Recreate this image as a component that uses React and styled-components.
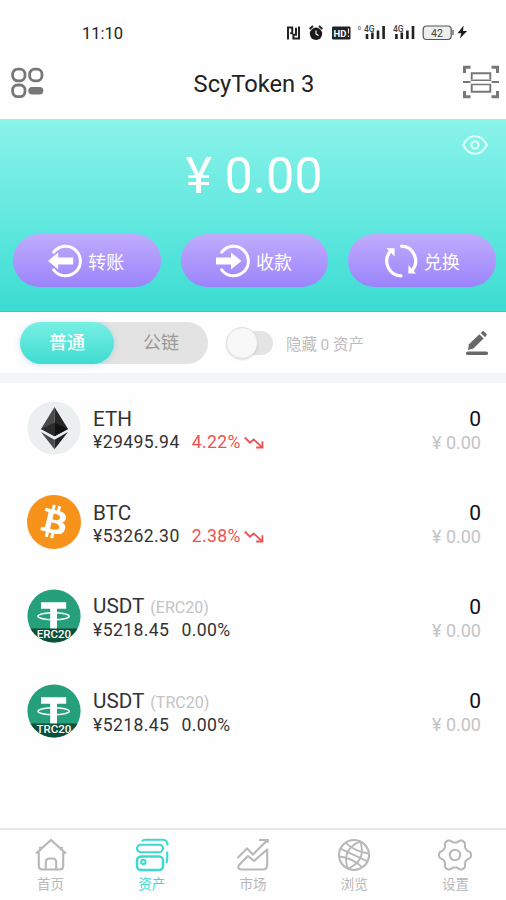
import React from "react";
import styled, { createGlobalStyle } from "styled-components";
import { SiBitcoin } from "react-icons/si";

const assets = [
  { name: "ETH", coin: "eth", price: "¥29495.94", change: "4.22%", down: true },
  { name: "BTC", coin: "btc", price: "¥53262.30", change: "2.38%", down: true },
  { name: "USDT", coin: "usdt", chain: "ERC20", price: "¥5218.45", change: "0.00%" },
  { name: "USDT", coin: "usdt", chain: "TRC20", price: "¥5218.45", change: "0.00%" },
];

function App() {
  return (
    <Screen>
      <GlobalStyle />
      <StatusBar />
      <Header>
        <MenuIcon />
        <h1>ScyToken 3</h1>
        <ScanIcon />
      </Header>
      <Balance>
        <EyeRow>
          <EyeIcon />
        </EyeRow>
        <Total>¥ 0.00</Total>
        <Actions>
          <ActionButton>
            <SendIcon />
            转账
          </ActionButton>
          <ActionButton>
            <ReceiveIcon />
            收款
          </ActionButton>
          <ActionButton>
            <SwapIcon />
            兑换
          </ActionButton>
        </Actions>
      </Balance>
      <Filter>
        <Segment>
          <SegmentItem $active>普通</SegmentItem>
          <SegmentItem>公链</SegmentItem>
        </Segment>
        <Toggle>
          <Knob />
          <Track />
        </Toggle>
        <HideLabel>隐藏 0 资产</HideLabel>
        <PencilIcon />
      </Filter>
      <AssetList>
        {assets.map((asset) => (
          <AssetRow key={asset.name + asset.chain}>
            <CoinIcon coin={asset.coin} chain={asset.chain} />
            <AssetInfo>
              <AssetName>
                {asset.name}
                {asset.chain && <small>({asset.chain})</small>}
              </AssetName>
              <AssetPrice>
                {asset.price}
                <Change $down={asset.down}>{asset.change}</Change>
                {asset.down && <DownIcon />}
              </AssetPrice>
            </AssetInfo>
            <AssetAmount>
              <b>0</b>
              <span>¥ 0.00</span>
            </AssetAmount>
          </AssetRow>
        ))}
      </AssetList>
      <TabBar>
        <Tab>
          <HomeIcon />
          首页
        </Tab>
        <Tab $active>
          <WalletIcon />
          资产
        </Tab>
        <Tab>
          <MarketIcon />
          市场
        </Tab>
        <Tab>
          <GlobeIcon />
          浏览
        </Tab>
        <Tab>
          <GearIcon />
          设置
        </Tab>
      </TabBar>
    </Screen>
  );
}

function StatusBar() {
  return (
    <Status>
      <time>11:10</time>
      <svg width="184" height="20" viewBox="285 23 184 20">
        {/* nfc */}
        <path d="M288 39.500V26.500M288 27.400h4.200v5.800h-2M299 26.500v13M299 38.500h-5.600v-3.800h2.600v-7" fill="none" stroke="#222" strokeWidth="2" />
        {/* alarm */}
        <circle cx="316" cy="33.800" r="6.200" fill="#1c1c1c" />
        <path d="M309.600 29l3.400-3M322.400 29l-3.400-3" stroke="#1c1c1c" strokeWidth="1.800" />
        <path d="M316 30.500v3.600l2.600 1.400" fill="none" stroke="#fff" strokeWidth="1.100" />
        {/* hd */}
        <rect x="332" y="26.500" width="18.500" height="13" rx="1.200" fill="#222" />
        <text x="333.600" y="36.600" fontSize="9.500" fontWeight="700" fill="#fff">HD</text>
        <path d="M348.400 28.500v5M348.400 35.500v1.500" stroke="#fff" strokeWidth="1" />
        {/* signal */}
        <text x="357.800" y="30" fontSize="5.500" fill="#333">0</text>
        <text x="364" y="32" fontSize="8.500" fontWeight="500" fill="#444">4G</text>
        <path d="M367 39v-5M372.400 39v-6.500M378 39V30.500M383.600 39V26" stroke="#222" strokeWidth="2.600" />
        <text x="393" y="32" fontSize="8.500" fontWeight="500" fill="#444">4G</text>
        <path d="M396.400 39v-5M401.800 39v-6.500M407.400 39V30.500M413 39V26" stroke="#222" strokeWidth="2.600" />
        {/* battery */}
        <rect x="423.200" y="26" width="28" height="13.500" rx="3.500" fill="#eee" stroke="#555" strokeWidth="1.200" />
        <path d="M453 30v5" stroke="#666" strokeWidth="1.400" />
        <text x="431" y="36.600" fontSize="10.500" fill="#444">42</text>
        <path d="M463.600 25.600l-6 7.600h3.700l-1.400 5.200 7.200-7.400h-4.100z" fill="#1a1a1a" />
      </svg>
    </Status>
  );
}

const MenuIcon = () => (
  <svg width="34" height="32" viewBox="0 0 34 32" fill="none" stroke="#777" strokeWidth="2.800">
    <rect x="2.600" y="2.200" width="12.400" height="11.600" rx="5" />
    <rect x="19.600" y="2.200" width="12.400" height="11.600" rx="5" />
    <rect x="2.600" y="18" width="12.400" height="11.600" rx="5" />
    <rect x="18.300" y="20" width="15" height="7.400" rx="3.700" fill="#777" stroke="none" />
  </svg>
);

const ScanIcon = () => (
  <svg width="38" height="34" viewBox="0 0 38 34" fill="none" stroke="#777" strokeWidth="3">
    <path d="M2.500 8V2.200H8.500M29.500 2.200h6V8M2.500 26v5.800H8.500M29.500 31.800h6V26" />
    <path d="M9.700 14.500V8.200h18.600v6.300M9.700 20v6.800h18.600V20" strokeWidth="1.900" />
    <path d="M1 17.100h7.500M29.500 17.100H37" strokeWidth="2" />
    <path d="M8.800 15.200h20.400M8.800 19.600h20.400" strokeWidth="1.500" />
  </svg>
);

const EyeIcon = () => (
  <svg width="26" height="20" viewBox="0 0 26 20" fill="none" stroke="#dcfffc" strokeWidth="2.100">
    <path d="M1.200 10C4.300 3.800 8.500 1.200 13 1.200S21.700 3.800 24.800 10C21.700 16.200 17.500 18.800 13 18.800S4.300 16.200 1.200 10z" strokeLinejoin="round" />
    <circle cx="13" cy="10" r="3.600" />
  </svg>
);

const SendIcon = () => (
  <svg width="34" height="34" viewBox="0 0 34 34">
    <path d="M5.700 8.200A14.800 14.800 0 1 1 5.700 25.800" fill="none" stroke="#fff" strokeWidth="3" strokeLinecap="round" />
    <path d="M0 17l10.200-8.600v5.200h15v6.800h-15v5.200z" fill="#fff" />
  </svg>
);

const ReceiveIcon = () => (
  <svg width="34" height="34" viewBox="0 0 34 34">
    <path d="M5.700 8.200A14.800 14.800 0 1 1 5.700 25.800" fill="none" stroke="#fff" strokeWidth="3" strokeLinecap="round" />
    <path d="M25.400 17L15 8.400v5.200H0v6.800h15v5.200z" fill="#fff" />
  </svg>
);

const SwapIcon = () => (
  <svg width="34" height="34" viewBox="0 0 34 34">
    <g fill="none" stroke="#fff" strokeWidth="3.200" strokeLinecap="round">
      <path d="M17.500 2.200A14.800 14.800 0 0 1 28.600 26" />
      <path d="M17 31.800A14.800 14.800 0 0 1 5.800 8" />
    </g>
    <path d="M2.400 4.200h8.200v8.200zM32 29.600h-7.600V21z" fill="#fff" />
  </svg>
);

const PencilIcon = () => (
  <svg width="24" height="26" viewBox="0 0 24 26" fill="#686868">
    <path d="M3 20l1-5.800L14.400 4.200l4.200 4.400L8.400 18.600z" />
    <path d="M15.800 3l1.500-1.600q.9-.8 1.800 0l2.300 2.400q.8.900 0 1.700L20 7.200z" />
    <rect x="1" y="21.500" width="22" height="3.600" rx="1.700" />
  </svg>
);

const DownIcon = () => (
  <svg width="20" height="13" viewBox="0 0 20 13" fill="none" stroke="#ee5253" strokeWidth="1.800">
    <path d="M.8 1.500l5.200 5.200 3.700-3.200 8.300 7.700M18.400 5.200v6.300h-6.200" />
  </svg>
);

function CoinIcon({ coin, chain }) {
  if (coin === "btc") {
    return (
      <Coin>
        <SiBitcoin size={54} color="#f7931a" />
      </Coin>
    );
  }
  if (coin === "eth") {
    return (
      <Coin>
        <svg width="54" height="54" viewBox="0 0 54 54">
          <circle cx="27" cy="27" r="26.600" fill="#ebeff0" />
          <path d="M27.500 6L14 28l13.500 7.200z" fill="#4a4a4a" />
          <path d="M27.500 6L41 28l-13.500 7.200z" fill="#282828" />
          <path d="M27.500 21.800L14 28l13.500 7.200z" fill="#2b2b2b" />
          <path d="M27.500 21.800L41 28l-13.500 7.200z" fill="#111" />
          <path d="M14 31l13.500 7.700v9.500z" fill="#4a4a4a" />
          <path d="M41 31l-13.500 7.700v9.500z" fill="#232323" />
        </svg>
      </Coin>
    );
  }
  return (
    <Coin>
      <svg width="54" height="54" viewBox="0 0 54 54">
        <clipPath id={"round" + chain}>
          <circle cx="27" cy="27" r="26.600" />
        </clipPath>
        <g clipPath={`url(#round${chain})`}>
          <rect width="54" height="54" fill="#25a07b" />
          <path d="M14 13.300h25.200v6.400h-9.200V40h-6.800V19.700H14z" fill="#fff" />
          <ellipse cx="26.600" cy="27.300" rx="15.600" ry="3.500" fill="none" stroke="#fff" strokeWidth="1.500" />
          <rect y="39.500" width="54" height="15" fill="#0e4f39" />
          <text x="27" y="48.600" textAnchor="middle" fontSize="11.500" fontWeight="500" fill="#fff">
            {chain}
          </text>
        </g>
      </svg>
    </Coin>
  );
}

const HomeIcon = () => (
  <TabIcon>
    <path d="M2 15.500L17 2l15 13.500M6.200 13V8.800M27.800 13V8.800M4.800 14v14q0 3.500 3.500 3.500h17.400q3.500 0 3.500-3.500V14" />
    <path d="M11.800 31v-6.500q0-4 4-4h2.400q4 0 4 4V31" />
  </TabIcon>
);

const WalletIcon = () => (
  <TabIcon>
    <path d="M7 3.500q1-1.700 3.500-1.700H28q4.500 0 4.500 5.700M32.200 13.500v8q0 2.500-1.200 3.500" />
    <rect x="2" y="6.800" width="26" height="7.400" rx="3.700" />
    <rect x="2" y="18.500" width="26" height="13.500" rx="4" strokeWidth="2.500" />
    <circle cx="8.400" cy="23.900" r="2.100" />
  </TabIcon>
);

const MarketIcon = () => (
  <TabIcon>
    <path d="M1.500 20L11 10.500l6 6L31 2.500M23 2h8.800v2.800" />
    <path d="M3 27l9-9 6 5L31.200 11.500V27q0 4.500-4.500 4.500H5Q.8 30.800 3 27z" strokeLinejoin="round" />
  </TabIcon>
);

const GlobeIcon = () => (
  <TabIcon>
    <circle cx="17" cy="17" r="15" />
    <g transform="rotate(25 17 17)" strokeWidth="1.800">
      <path d="M2 17h30M4.500 9.500q12.500 4 25 0M4.500 24.500q12.500-4 25 0" />
      <path d="M17 2q-14 15 0 30M17 2q14 15 0 30" />
    </g>
  </TabIcon>
);

// six soft teeth around the centre
const gearPoints = Array.from({ length: 120 }, (_, i) => {
  const a = (i / 120) * Math.PI * 2;
  const r = 14.2 + 1.9 * Math.tanh(1.6 * Math.cos(6 * a));
  return `${(17 + r * Math.cos(a)).toFixed(2)},${(17 + r * Math.sin(a)).toFixed(2)}`;
}).join(" ");

const GearIcon = () => (
  <TabIcon>
    <polygon points={gearPoints} strokeLinejoin="round" />
    <circle cx="17" cy="17" r="5.200" />
  </TabIcon>
);

const TabIcon = ({ children }) => (
  <svg width="34" height="34" viewBox="0 0 34 34" fill="none" stroke="currentColor" strokeWidth="2.100">
    {children}
  </svg>
);

const GlobalStyle = createGlobalStyle`
  * {
    box-sizing: border-box;
  }
  body {
    margin: 0;
    background: #fff;
    font-family: Roboto, "Noto Sans CJK SC", sans-serif;
  }
`;

const Screen = styled.div`
  width: 506px;
  height: 900px;
  display: flex;
  flex-direction: column;
  overflow: hidden;
  background: #fefefe;
`;

const Status = styled.div`
  height: 47px;
  padding: 20px 37px 0 82px;
  display: flex;
  align-items: flex-start;
  justify-content: space-between;
  color: #222;
  time {
    margin-top: 4px;
    font-size: 16.500px;
    line-height: 20px;
  }
  svg {
    margin-top: 3px;
  }
`;

const Header = styled.header`
  height: 72px;
  padding: 1px 6px 1px 10px;
  display: flex;
  align-items: center;
  justify-content: space-between;
  h1 {
    margin: 0;
    padding: 1px 0 0 2px;
    font-size: 23.700px;
    font-weight: 400;
    line-height: 30px;
    color: #222;
  }
  svg:last-child {
    margin-bottom: 2px;
  }
`;

const Balance = styled.section`
  height: 193px;
  display: flex;
  flex-direction: column;
  background: linear-gradient(#8bf3ea, #5fe7de 56%, #3bdcd2);
  border-bottom: 1px solid #2fcfc4;
`;

const EyeRow = styled.div`
  height: 29px;
  padding: 16px 18px 0 0;
  display: flex;
  justify-content: flex-end;
  svg {
    flex: none;
  }
`;

const Total = styled.div`
  height: 56px;
  padding-left: 2px;
  font-size: 50.300px;
  line-height: 56px;
  text-align: center;
  color: #fff;
`;

const Actions = styled.div`
  margin-top: 30px;
  padding: 0 10px 0 13px;
  display: flex;
  gap: 20px;
`;

const ActionButton = styled.button`
  flex: 1;
  height: 53px;
  padding: 0 1px 0 0;
  display: flex;
  align-items: center;
  justify-content: center;
  gap: 6px;
  border: none;
  border-radius: 27px;
  background: linear-gradient(#c0acfd, #9b84fb);
  color: #fff;
  font-family: inherit;
  font-size: 18px;
`;

const Filter = styled.div`
  height: 71px;
  padding: 0 17px 0 20px;
  display: flex;
  align-items: center;
  border-bottom: 10px solid #f4f5f6;
`;

const Segment = styled.div`
  width: 188px;
  height: 42px;
  display: flex;
  border-radius: 21px;
  background: #e3e3e3;
`;

const SegmentItem = styled.div`
  flex: 1;
  border-radius: 21px;
  font-size: 18px;
  line-height: 42px;
  text-align: center;
  font-weight: ${(props) => (props.$active ? 500 : 400)};
  color: ${(props) => (props.$active ? "#fff" : "#999")};
  background: ${(props) => (props.$active ? "linear-gradient(#78efe5, #3fdcd0)" : "none")};
  box-shadow: ${(props) => (props.$active ? "0 1px 6px rgba(60, 150, 200, 0.25)" : "none")};
`;

const Toggle = styled.div`
  margin-left: 18px;
  display: flex;
  align-items: center;
`;

const Knob = styled.div`
  width: 32px;
  height: 32px;
  border-radius: 50%;
  border: 1px solid #e0e0e0;
  background: #f8f8f8;
  box-shadow: 0 1px 2px rgba(0, 0, 0, 0.12);
  z-index: 1;
`;

const Track = styled.div`
  width: 31px;
  height: 24px;
  margin-left: -16px;
  border-radius: 12px;
  background: #e4e4e4;
`;

const HideLabel = styled.span`
  flex: 1;
  margin-left: 13px;
  font-size: 15.400px;
  color: #bdbdbd;
`;

const AssetList = styled.div`
  flex: 1;
`;

const AssetRow = styled.div`
  height: 94.200px;
  padding: 0 25px 4px 27px;
  display: flex;
  align-items: center;
`;

const Coin = styled.div`
  width: 54px;
  height: 54px;
  display: flex;
  border-radius: 50%;
  background: #fff;
`;

const AssetInfo = styled.div`
  flex: 1;
  padding-top: 5px;
  margin-left: 12px;
`;

const AssetName = styled.div`
  font-size: 20.700px;
  line-height: 23px;
  color: #333;
  small {
    margin-left: 6px;
    font-size: 16px;
    color: #c4c4c4;
  }
`;

const AssetPrice = styled.div`
  display: flex;
  align-items: center;
  font-size: 17.600px;
  line-height: 23px;
  letter-spacing: 0.400px;
  color: #333;
`;

const Change = styled.span`
  margin: 0 3px 0 12px;
  color: ${(props) => (props.$down ? "#ee5253" : "inherit")};
`;

const AssetAmount = styled.div`
  padding-top: 5px;
  display: flex;
  flex-direction: column;
  align-items: flex-end;
  b {
    font-size: 21px;
    line-height: 23px;
    font-weight: 400;
    color: #111;
  }
  span {
    font-size: 18px;
    line-height: 23px;
    color: #c4c4c4;
  }
`;

const TabBar = styled.nav`
  height: 72px;
  display: flex;
  border-top: 2px solid #e6e6e6;
`;

const Tab = styled.div`
  flex: 1;
  padding-top: 8px;
  display: flex;
  flex-direction: column;
  align-items: center;
  gap: 3px;
  font-size: 13.500px;
  line-height: 18px;
  color: ${(props) => (props.$active ? "#3cd9d0" : "#b8b8b8")};
`;

export default App;
